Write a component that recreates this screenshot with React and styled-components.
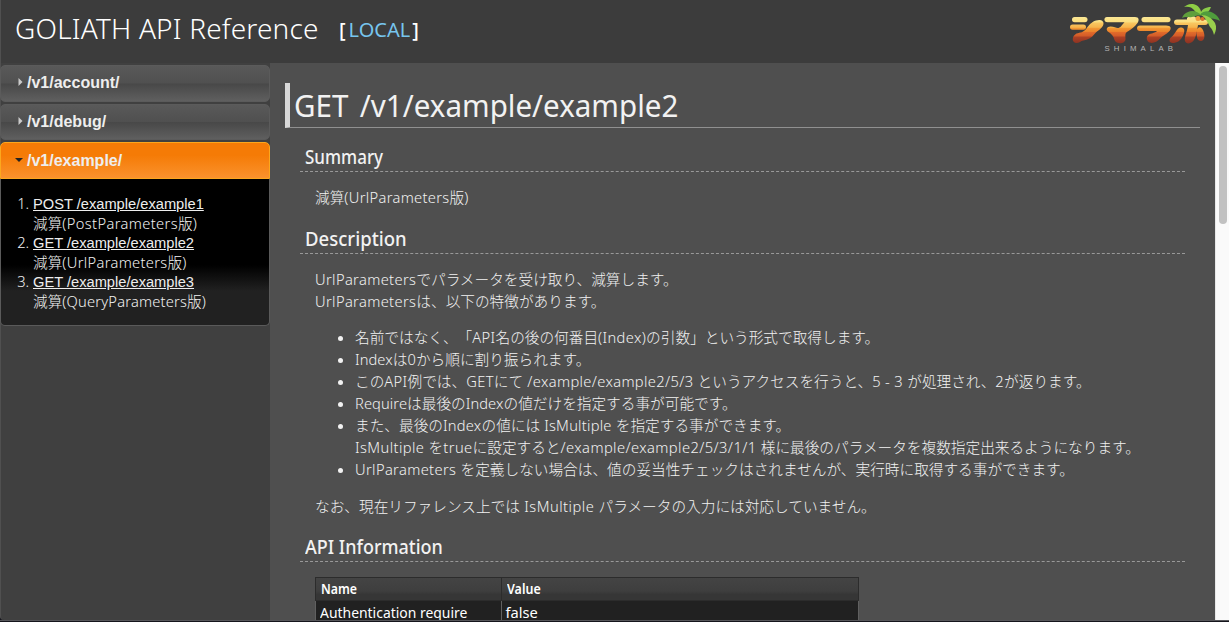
import React from "react";
import styled, { createGlobalStyle } from "styled-components";

const jp = `"Noto Sans", "Noto Sans CJK JP", sans-serif`;

const Global = createGlobalStyle`
  *, *::before, *::after { box-sizing: border-box; }
  body { margin: 0; background: #4f4f4f; color: #f2f2f2; overflow: hidden;
    font: 300 14.667px/22px ${jp}; text-spacing-trim: space-all; }
`;

const Page = styled.div`
  height: 622px;
  display: flex;
  flex-direction: column;
  border-bottom: 1px solid #15151c;
  overflow: hidden;
`;
const Header = styled.header`
  flex: 0 0 63px;
  display: flex;
  align-items: flex-start;
  background: #3c3c3c;
  border-left: 1px solid #505050;
`;
const Title = styled.div`
  margin: 9px 0 0 14px;
  width: 324px;
  font-size: 28px;
  line-height: 38px;
  letter-spacing: 0.19px;
  color: #fff;
  white-space: nowrap;
`;
const Env = styled.div`
  flex: 1;
  margin-top: 17px;
  font-size: 20px;
  line-height: 26px;
  font-weight: 500;
  color: #fff;
  white-space: nowrap;
`;
const EnvName = styled.span`
  margin: 0 2px 0 3px;
  font-weight: 400;
  color: #77c5ee;
`;
const LogoSvg = styled.svg`
  display: block;
  width: 169px;
  height: 63px;
`;
const Body = styled.div`
  flex: 1;
  min-height: 0;
  display: flex;
  border-bottom: 1px solid #56565a;
  background: #15151c;
`;
const Sidebar = styled.nav`
  flex: 0 0 270px;
  padding-top: 2px;
  background: #404040;
  border-left: 1px solid #505050;
  border-bottom-left-radius: 4px;
`;
const Group = styled.div`
  display: flex;
  align-items: center;
  height: ${(p) => p.$h}px;
  margin: 0 0 ${(p) => (p.$open ? 0 : 2)}px -1px;
  padding: 0 0 ${(p) => (p.$h > 36 && !p.$open ? 2 : 0)}px ${(p) => (p.$open ? 13.5 : 17)}px;
  border: 1px solid ${(p) => (p.$open ? "#fca71d" : "#5b5b5b")};
  border-radius: ${(p) => (p.$open ? "5px 5px 0 0" : "5px")};
  background: ${(p) =>
    p.$open
      ? "linear-gradient(#f57b06 35%, #fa922d)"
      : "linear-gradient(#595959 0, #505050 49%, #484848 51%, #5f5f5f 100%)"};
  font: bold 16px/20px "Liberation Sans", Arial, sans-serif;
  color: #eee;
  svg { margin: -2px ${(p) => (p.$open ? 4.5 : 4)}px 0 0; }
`;
const Panel = styled.div`
  height: 147px;
  margin-left: -1px;
  padding-top: 15px;
  border: 1px solid #5a5a5a;
  border-top: 0;
  border-radius: 0 0 5px 5px;
  background: linear-gradient(#000 0 86px, #212121 112px);
`;
const Endpoints = styled.ol`
  margin: 0;
  padding: 0 0 0 32px;
  li { height: 39px; line-height: 19.5px; white-space: nowrap; }
`;
const Link = styled.a`
  font: 14.667px/19px "Liberation Sans", Arial, sans-serif;
  text-decoration: underline;
  color: #eee;
`;
const Main = styled.main`
  flex: 1;
  min-width: 0;
  padding: 20px 15px 0;
  background: #4f4f4f;
  overflow: hidden;
`;
const H1 = styled.h1`
  height: 45px;
  margin: 0;
  padding-left: 4px;
  border-left: 5px solid #d8d8d8;
  border-bottom: 1px solid #909090;
  font-size: 31px;
  line-height: 44px;
  font-weight: 400;
  word-spacing: 4px;
  white-space: nowrap;
`;
const H2 = styled.h2`
  height: 28px;
  margin: ${(p) => p.$mt}px 15px 14px;
  padding-left: 5px;
  border-bottom: 1px dashed #999;
  font-size: 20px;
  line-height: 25px;
  font-weight: 500;
  white-space: nowrap;
`;
const Condensed = styled.span`
  display: inline-block;
  transform: scaleX(${(p) => p.$x});
  transform-origin: 0 50%;
`;
const P = styled.p`
  margin: 0 0 0 30px;
  white-space: nowrap;
`;
const List = styled.ul`
  margin: 14px 0 15px 30px;
  padding-left: 40px;
  white-space: nowrap;
`;
const Latin = styled.span`
  letter-spacing: ${(p) => p.$ls}px;
`;
const Table = styled.div`
  display: grid;
  grid-template-columns: 186px 358px;
  width: 544px;
  margin: 15px 0 0 30px;
  color: #fff;
  font-weight: 400;
`;
const Th = styled.div`
  height: 24px;
  padding-left: 5px;
  border: 1px solid #2c2c2c;
  border-right-width: ${(p) => (p.$last ? 1 : 0)}px;
  background: linear-gradient(#444 0, #3e3e3e 60%, #363636 75%);
  font-weight: 600;
  font-size: 14px;
`;
const Td = styled.div`
  height: 24px;
  padding-left: 3.5px;
  border-left: 1px solid #606060;
  border-right: ${(p) => (p.$last ? "1px solid #606060" : "0")};
  background: #212121;
`;
const Scroll = styled.div`
  flex: 0 0 14px;
  padding: 3px 2px 0 3px;
  background: #fafafa;
  border-left: 1px solid #e8e8e8;
`;
const Thumb = styled.div`
  height: 158px;
  border-radius: 4px;
  background: #c1c1c1;
`;

function Mixed({ text, ls = 0.37 }) {
  return text.split(/([\x20-\x7e]+)/).map((t, i) =>
    i % 2 ? <Latin key={i} $ls={ls}>{t}</Latin> : t
  );
}

const Arrow = ({ open }) =>
  open ? (
    <svg width="8" height="6"><path d="M0 1h8L4 5z" fill="#222" /></svg>
  ) : (
    <svg width="5" height="8"><path d="M0.5 0v8l4-4z" fill="#ccc" /></svg>
  );

const sunset = [
  [0, "#fbe795"], [0.2, "#fade7f"], [0.22, "#f9c862"], [0.4, "#f6b34b"],
  [0.42, "#f29a35"], [0.56, "#ec842c"], [0.58, "#e26c2b"], [0.74, "#d25a28"],
  [0.76, "#ae4225"], [1, "#8e3322"],
];

const Logo = () => (
  <LogoSvg viewBox="1060 0 169 63">
    <defs>
      <linearGradient id="sun" gradientUnits="userSpaceOnUse" x1="0" y1="17" x2="0" y2="43">
        {sunset.map(([o, c]) => <stop key={o} offset={o} stopColor={c} />)}
      </linearGradient>
    </defs>
    <g fill="url(#sun)">
      <rect x="1072" y="17" width="15.500" height="5.200" rx="2.600" />
      <rect x="1070" y="24.500" width="16" height="5.200" rx="2.600" />
      <path d="M1096 20.500c4-1.500 8 0 7.500 3.500c-1 5-6 6-9 10c-3 4-7 6-11 6.500c-3 .5-4 2.500-7 2.500c-5 0-5-7 0-9.500c4-1 7-1 10-5c3-4 5-6.500 9.500-8z" />
      <path d="M1107 17h28c4 0 4.500 3 2.500 6c-3 4-6 6-9 8c-4 2-3 4-3 8c0 5-9 6-11 1c-1-4-3-6-6-8c-3-2-2-5.500 2-5.500c4 0 6 2 8 1.500c3-1 4-4 6-5.700h-17c-4 0-4-5.300-.5-5.300z" />
      <rect x="1141.500" y="17" width="29" height="5.200" rx="2.600" />
      <path d="M1140 25.500h26c5 0 6 3 3 6c-3 3-6 4-9 7c-3 4-9 6-12 3c-3-4 0-8 4-8c3-1 4-1.500 5-2.500h-17c-4 0-4-5.500 0-5.500z" />
      <path d="M1187 18c2-3 9-3 10 1.500h8c4 0 4 5.500 0 5.500h-7c-1 5-1 8-3 13c-2 6-9 7-10 3c-1-4 2-8 3-16h-11c-4 0-4-5.500 0-5.500h10z" />
      <path d="M1181 27.500c4 0 4 4 2 8c-2 5-6 7.500-10.500 7.500c-3.500 0-4-4-1-6c4-3 5-9.500 9.500-9.500z" />
      <path d="M1198 28c3-2 5 1 6 5c1 4 0 8-3 8c-4 0-4-4-4.500-7c0-3 0-5 1.500-6z" />
    </g>
    <g fill="#7fc242">
      <path d="M1201 15c1-6-3-10-8-11c-4-.5-7 1-9 3c4-1 8 0 10 3c2 3 4 5 7 5z" fill="#8fce45" />
      <path d="M1202 16c-4-5-10-6-14-4c-3 1-5 3-6 6c4-2 7 0 10-1c4-1 6-2 10-1z" fill="#5f9f3c" />
      <path d="M1200 15c1-6 6-8 11-8c-1 2-2 5-5 6c-2 1-4 1-6 2z" fill="#8acb49" />
      <path d="M1200 14.500c4-4 9-4 14-1c3 2 5 4 6 7.500c-4-2-5-2-9-2.500s-7-3-11-4z" fill="#4f9c3c" />
      <path d="M1201 15c6 0 11 3 14 8c2 4 1 8-1 12c-1-4-2-6-4-8c-2-4-4-9-9-12z" fill="#9ad04c" />
      <circle cx="1198" cy="18.500" r="2.500" fill="#f09a3c" />
      <circle cx="1202.500" cy="19" r="2" fill="#d9702c" />
    </g>
    <text x="1104.500" y="51" textLength="68.500" fontFamily="Liberation Sans" fontSize="7.800" fontWeight="400" fill="#b4b4b4">SHIMALAB</text>
  </LogoSvg>
);

const endpoints = [
  ["POST /example/example1", "減算(PostParameters版)", 0.38],
  ["GET /example/example2", "減算(UrlParameters版)", 0.33],
  ["GET /example/example3", "減算(QueryParameters版)", 0.2],
];
const notes = [
  [["名前ではなく、「API名の後の何番目(Index)の引数」という形式で取得します。"]],
  [["Indexは0から順に割り振られます。", 0.1]],
  [["このAPI例では、GETにて /example/example2/5/3 というアクセスを行うと、5 - 3 が処理され、2が返ります。"]],
  [["Requireは最後のIndexの値だけを指定する事が可能です。", 0.1]],
  [
    ["また、最後のIndexの値には IsMultiple を指定する事ができます。", 0.25],
    ["IsMultiple をtrueに設定すると/example/example2/5/3/1/1 様に最後のパラメータを複数指定出来るようになります。", 0.43],
  ],
  [["UrlParameters を定義しない場合は、値の妥当性チェックはされませんが、実行時に取得する事ができます。"]],
];

export default function App() {
  return (
    <Page>
      <Global />
      <Header>
        <Title>GOLIATH API Reference</Title>
        <Env>[<EnvName>LOCAL</EnvName>]</Env>
        <Logo />
      </Header>
      <Body>
        <Sidebar>
          <Group $h={37}><Arrow />/v1/account/</Group>
          <Group $h={36}><Arrow />/v1/debug/</Group>
          <Group $h={37} $open><Arrow open />/v1/example/</Group>
          <Panel>
            <Endpoints>
              {endpoints.map(([a, b, ls]) => (
                <li key={a}><Link>{a}</Link><br /><Mixed text={b} ls={ls} /></li>
              ))}
            </Endpoints>
          </Panel>
        </Sidebar>
        <Main>
          <H1><Condensed $x={0.953}>GET /v1/example/example2</Condensed></H1>
          <H2 $mt={16}><Condensed $x={0.85}>Summary</Condensed></H2>
          <P><Mixed text="減算(UrlParameters版)" ls={0.33} /></P>
          <H2 $mt={18}><Condensed $x={0.927}>Description</Condensed></H2>
          <P><Mixed text="UrlParametersでパラメータを受け取り、減算します。" /></P>
          <P><Mixed text="UrlParametersは、以下の特徴があります。" /></P>
          <List>
            {notes.map((n) => (
              <li key={n[0][0]}>{n.map(([t, ls], i) => (
                <React.Fragment key={i}>{i > 0 && <br />}<Mixed text={t} ls={ls} /></React.Fragment>
              ))}</li>
            ))}
          </List>
          <P><Mixed text="なお、現在リファレンス上では IsMultiple パラメータの入力には対応していません。" ls={0.5} /></P>
          <H2 $mt={17}><Condensed $x={0.9}>API Information</Condensed></H2>
          <Table>
            <Th><Condensed $x={0.88}>Name</Condensed></Th>
            <Th $last><Condensed $x={0.89}>Value</Condensed></Th>
            <Td><Condensed $x={0.95}>Authentication require</Condensed></Td>
            <Td $last>false</Td>
          </Table>
        </Main>
        <Scroll><Thumb /></Scroll>
      </Body>
    </Page>
  );
}
